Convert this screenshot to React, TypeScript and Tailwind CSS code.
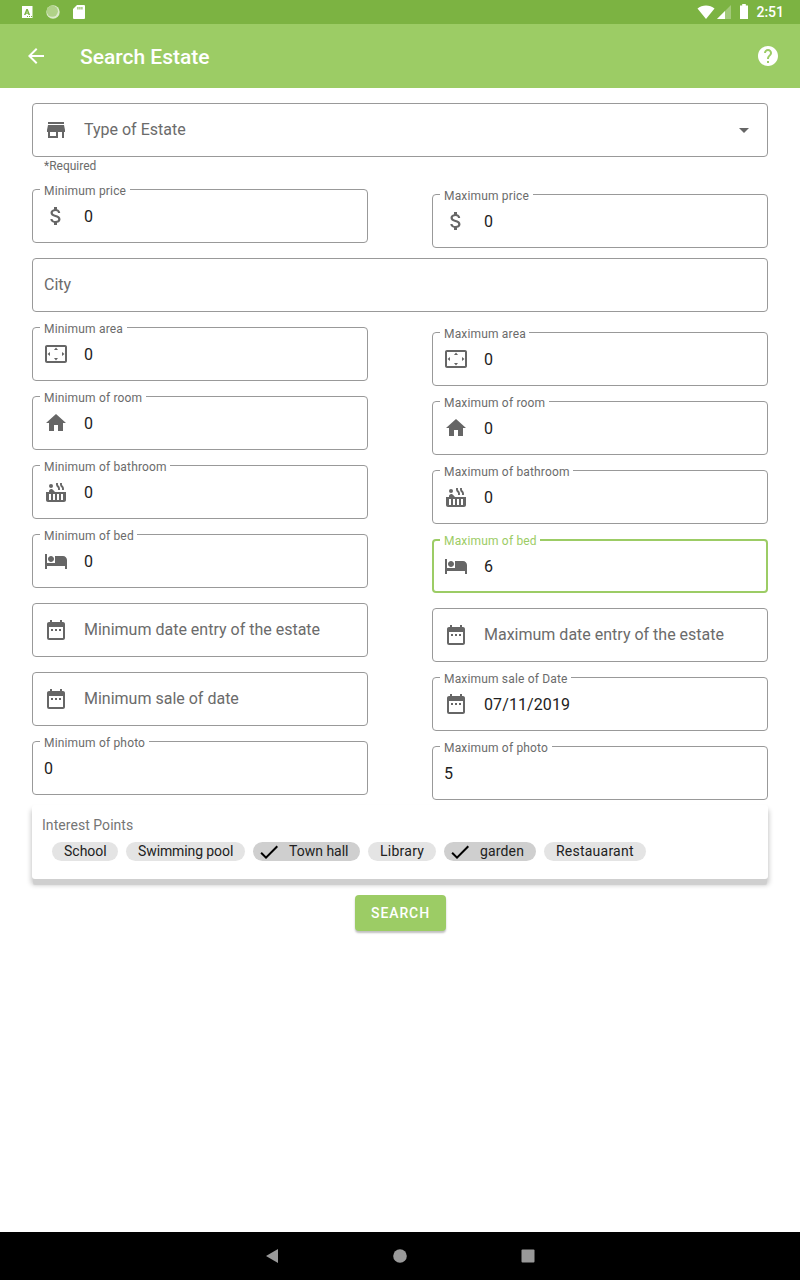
import type { ReactNode } from "react";
import {
  MdArrowBack,
  MdAttachMoney,
  MdCheck,
  MdDateRange,
  MdHelp,
  MdHome,
  MdHotTub,
  MdHotel,
  MdSettingsOverscan,
} from "react-icons/md";

function StoreIcon() {
  return (
    <svg viewBox="0 0 24 24" className="size-6" fill="currentColor">
      <path d="M20 4H4v2h16V4zm1 10v-2l-1-5H4l-1 5v2h1v6h10v-6h4v6h2v-6h1zm-9 4H6v-4h6v4z" />
    </svg>
  );
}

type FieldProps = {
  label: string;
  value?: string;
  icon?: ReactNode;
  trailing?: ReactNode;
  focused?: boolean;
};

function Field({ label, value, icon, trailing, focused }: FieldProps) {
  const frame = focused
    ? "border-2 border-[#9ccc65] px-[10px]"
    : "border border-[#999999] px-[11px]";
  const caption = focused
    ? "-top-[8px] left-[6px] text-[#9ccc65]"
    : "-top-[7px] left-[7px] text-[#6b6b6b]";
  return (
    <div className={`relative flex h-[54px] items-center rounded-[4px] ${frame}`}>
      {value !== undefined && (
        <span
          className={`absolute bg-white pr-[3.5px] pl-1 text-[12px] leading-[16px] tracking-[0.17px] whitespace-nowrap ${caption}`}
        >
          {label}
        </span>
      )}
      {icon && <span className="mr-4 flex size-6 shrink-0 text-[#666666]">{icon}</span>}
      {value !== undefined ? (
        <span className="pt-[2px] text-[16px] tracking-[0.1px] text-[#212121]">{value}</span>
      ) : (
        <span className="text-[16px] text-[#6b6b6b]">{label}</span>
      )}
      {trailing && <span className="ml-auto flex">{trailing}</span>}
    </div>
  );
}

type ChipProps = { label: string; checked?: boolean; size: string };

function Chip({ label, checked, size }: ChipProps) {
  return (
    <span
      className={`flex h-[19px] items-center rounded-full text-[14px] whitespace-nowrap text-[#212121] ${size} ${
        checked ? "bg-[#cfcfcf] pl-1" : "bg-[#e4e4e4] pl-3"
      }`}
    >
      {checked && <MdCheck className="mr-2 size-6 shrink-0 text-black" />}
      {label}
    </span>
  );
}

function StatusBar() {
  return (
    <div className="flex h-6 items-center bg-[#7cb342] pr-4 pl-[22px] text-white">
      <svg width="11" height="12" viewBox="0 0 11 12">
        <path
          fill="#fff"
          fillRule="evenodd"
          d="M0 0h10.5v12H0zM4.3 3L2 9h1.6l.4-1.2h2.1L6.5 9h1.6L5.8 3zM5.05 4.9l.6 1.8H4.5zM5 10v1h1v-1zm2 0v1h1v-1zm2 0v1h1v-1z"
        />
      </svg>
      <svg className="ml-[13px]" width="14" height="14" viewBox="0 0 14 14">
        <circle cx="7" cy="7" r="6.7" fill="#dcebcc" />
        <circle cx="6.3" cy="6.2" r="5.6" fill="#b0d288" />
      </svg>
      <svg className="ml-[13px]" width="12" height="14" viewBox="0 0 12 14">
        <path fill="#fff" d="M4 0h7a1 1 0 0 1 1 1v12a1 1 0 0 1-1 1H1a1 1 0 0 1-1-1V4z" />
        <path stroke="#9fc775" strokeWidth="2.5" strokeDasharray="1.4 .6" d="M4.2 3.2h6" />
      </svg>
      <div className="ml-auto flex items-center">
        <svg width="18" height="14" viewBox="0 0 18 14">
          <path fill="#fff" d="M.5 3.6C5 -.5 13 -.5 17.5 3.6L9 14z" />
        </svg>
        <svg className="ml-[2px]" width="14" height="14" viewBox="0 0 14 14">
          <path fill="#fff" fillOpacity=".3" d="M0 14L14 0v14z" />
          <path fill="#fff" d="M0 14L8 6v8z" />
        </svg>
        <svg className="-mt-[2px] ml-[9px]" width="8" height="15" viewBox="0 0 8 15">
          <path fill="#fff" d="M2.2 0h3.6v1.4H8V15H0V1.4h2.2z" />
        </svg>
        <span className="ml-2 text-[14px] leading-6 font-medium">2:51</span>
      </div>
    </div>
  );
}

export default function App() {
  return (
    <div className="flex h-[1280px] w-[800px] flex-col overflow-hidden bg-white font-['Roboto',sans-serif]">
      <StatusBar />
      <header className="flex h-16 items-center bg-[#9ccc65] px-5 text-white">
        <MdArrowBack className="ml-1 size-6" />
        <h1 className="ml-8 pt-[3px] text-[21px] font-medium">Search Estate</h1>
        <MdHelp className="ml-auto size-6" />
      </header>

      <main className="flex flex-1 flex-col px-8 pt-[15px]">
        <Field
          label="Type of Estate"
          icon={<StoreIcon />}
          trailing={
            <svg viewBox="0 0 24 24" className="size-6" fill="#666666">
              <path d="M7 10l5 5 5-5z" />
            </svg>
          }
        />
        <p className="ml-3 h-8 pt-[1px] text-[12px] leading-[16px] text-[#6b6b6b]">*Required</p>

        <div className="flex gap-16">
          <div className="flex-1">
            <Field label="Minimum price" value="0" icon={<MdAttachMoney className="size-6" />} />
          </div>
          <div className="flex-1 pt-[5px]">
            <Field label="Maximum price" value="0" icon={<MdAttachMoney className="size-6" />} />
          </div>
        </div>

        <div className="mt-[10px]">
          <Field label="City" />
        </div>

        <div className="mt-[15px] flex gap-16">
          <div className="flex flex-1 flex-col gap-[15px]">
            <Field label="Minimum area" value="0" icon={<MdSettingsOverscan className="size-6" />} />
            <Field label="Minimum of room" value="0" icon={<MdHome className="size-6" />} />
            <Field label="Minimum of bathroom" value="0" icon={<MdHotTub className="size-6" />} />
            <Field label="Minimum of bed" value="0" icon={<MdHotel className="size-6" />} />
            <Field label="Minimum date entry of the estate" icon={<MdDateRange className="size-6" />} />
            <Field label="Minimum sale of date" icon={<MdDateRange className="size-6" />} />
            <Field label="Minimum of photo" value="0" />
          </div>
          <div className="flex flex-1 flex-col gap-[15px] pt-[5px]">
            <Field label="Maximum area" value="0" icon={<MdSettingsOverscan className="size-6" />} />
            <Field label="Maximum of room" value="0" icon={<MdHome className="size-6" />} />
            <Field label="Maximum of bathroom" value="0" icon={<MdHotTub className="size-6" />} />
            <Field label="Maximum of bed" value="6" focused icon={<MdHotel className="size-6" />} />
            <Field label="Maximum date entry of the estate" icon={<MdDateRange className="size-6" />} />
            <Field label="Maximum sale of Date" value="07/11/2019" icon={<MdDateRange className="size-6" />} />
            <Field label="Maximum of photo" value="5" />
          </div>
        </div>

        <section className="mt-[5px] h-[74px] rounded-[3px] bg-white px-[10px] pt-[10px] shadow-[0_7px_1px_-1px_#cfcfcf,0_5px_5px_1px_rgba(0,0,0,0.22)] [clip-path:inset(-1px_-10px_-14px_-10px)]">
          <h2 className="text-[14px] leading-[20px] tracking-[0.05px] text-[#757575]">Interest Points</h2>
          <div className="mt-[7px] ml-[10px] flex gap-2">
            <Chip label="School" size="w-[66px]" />
            <Chip label="Swimming pool" size="w-[119px] tracking-[-0.1px]" />
            <Chip label="Town hall" checked size="w-[107px]" />
            <Chip label="Library" size="w-[68px] tracking-[0.25px]" />
            <Chip label="garden" checked size="w-[92px] tracking-[0.15px]" />
            <Chip label="Restauarant" size="w-[102px] tracking-[0.23px]" />
          </div>
        </section>

        <button className="mt-4 h-9 w-[91px] self-center rounded-[4px] bg-[#9ccc65] pl-[1px] text-[14px] font-medium tracking-[0.9px] text-white shadow-[0_2px_2px_rgba(0,0,0,0.25)]">
          SEARCH
        </button>
      </main>

      <nav className="flex h-12 items-center justify-center gap-[104px] bg-black">
        <svg viewBox="0 0 24 24" className="size-6" fill="#999999">
          <path d="M18 5v14L6 12z" />
        </svg>
        <svg viewBox="0 0 24 24" className="size-6" fill="#999999">
          <circle cx="12" cy="12" r="6.8" />
        </svg>
        <svg viewBox="0 0 24 24" className="size-6" fill="#999999">
          <rect x="5.5" y="5.5" width="13" height="13" rx="1" />
        </svg>
      </nav>
    </div>
  );
}
